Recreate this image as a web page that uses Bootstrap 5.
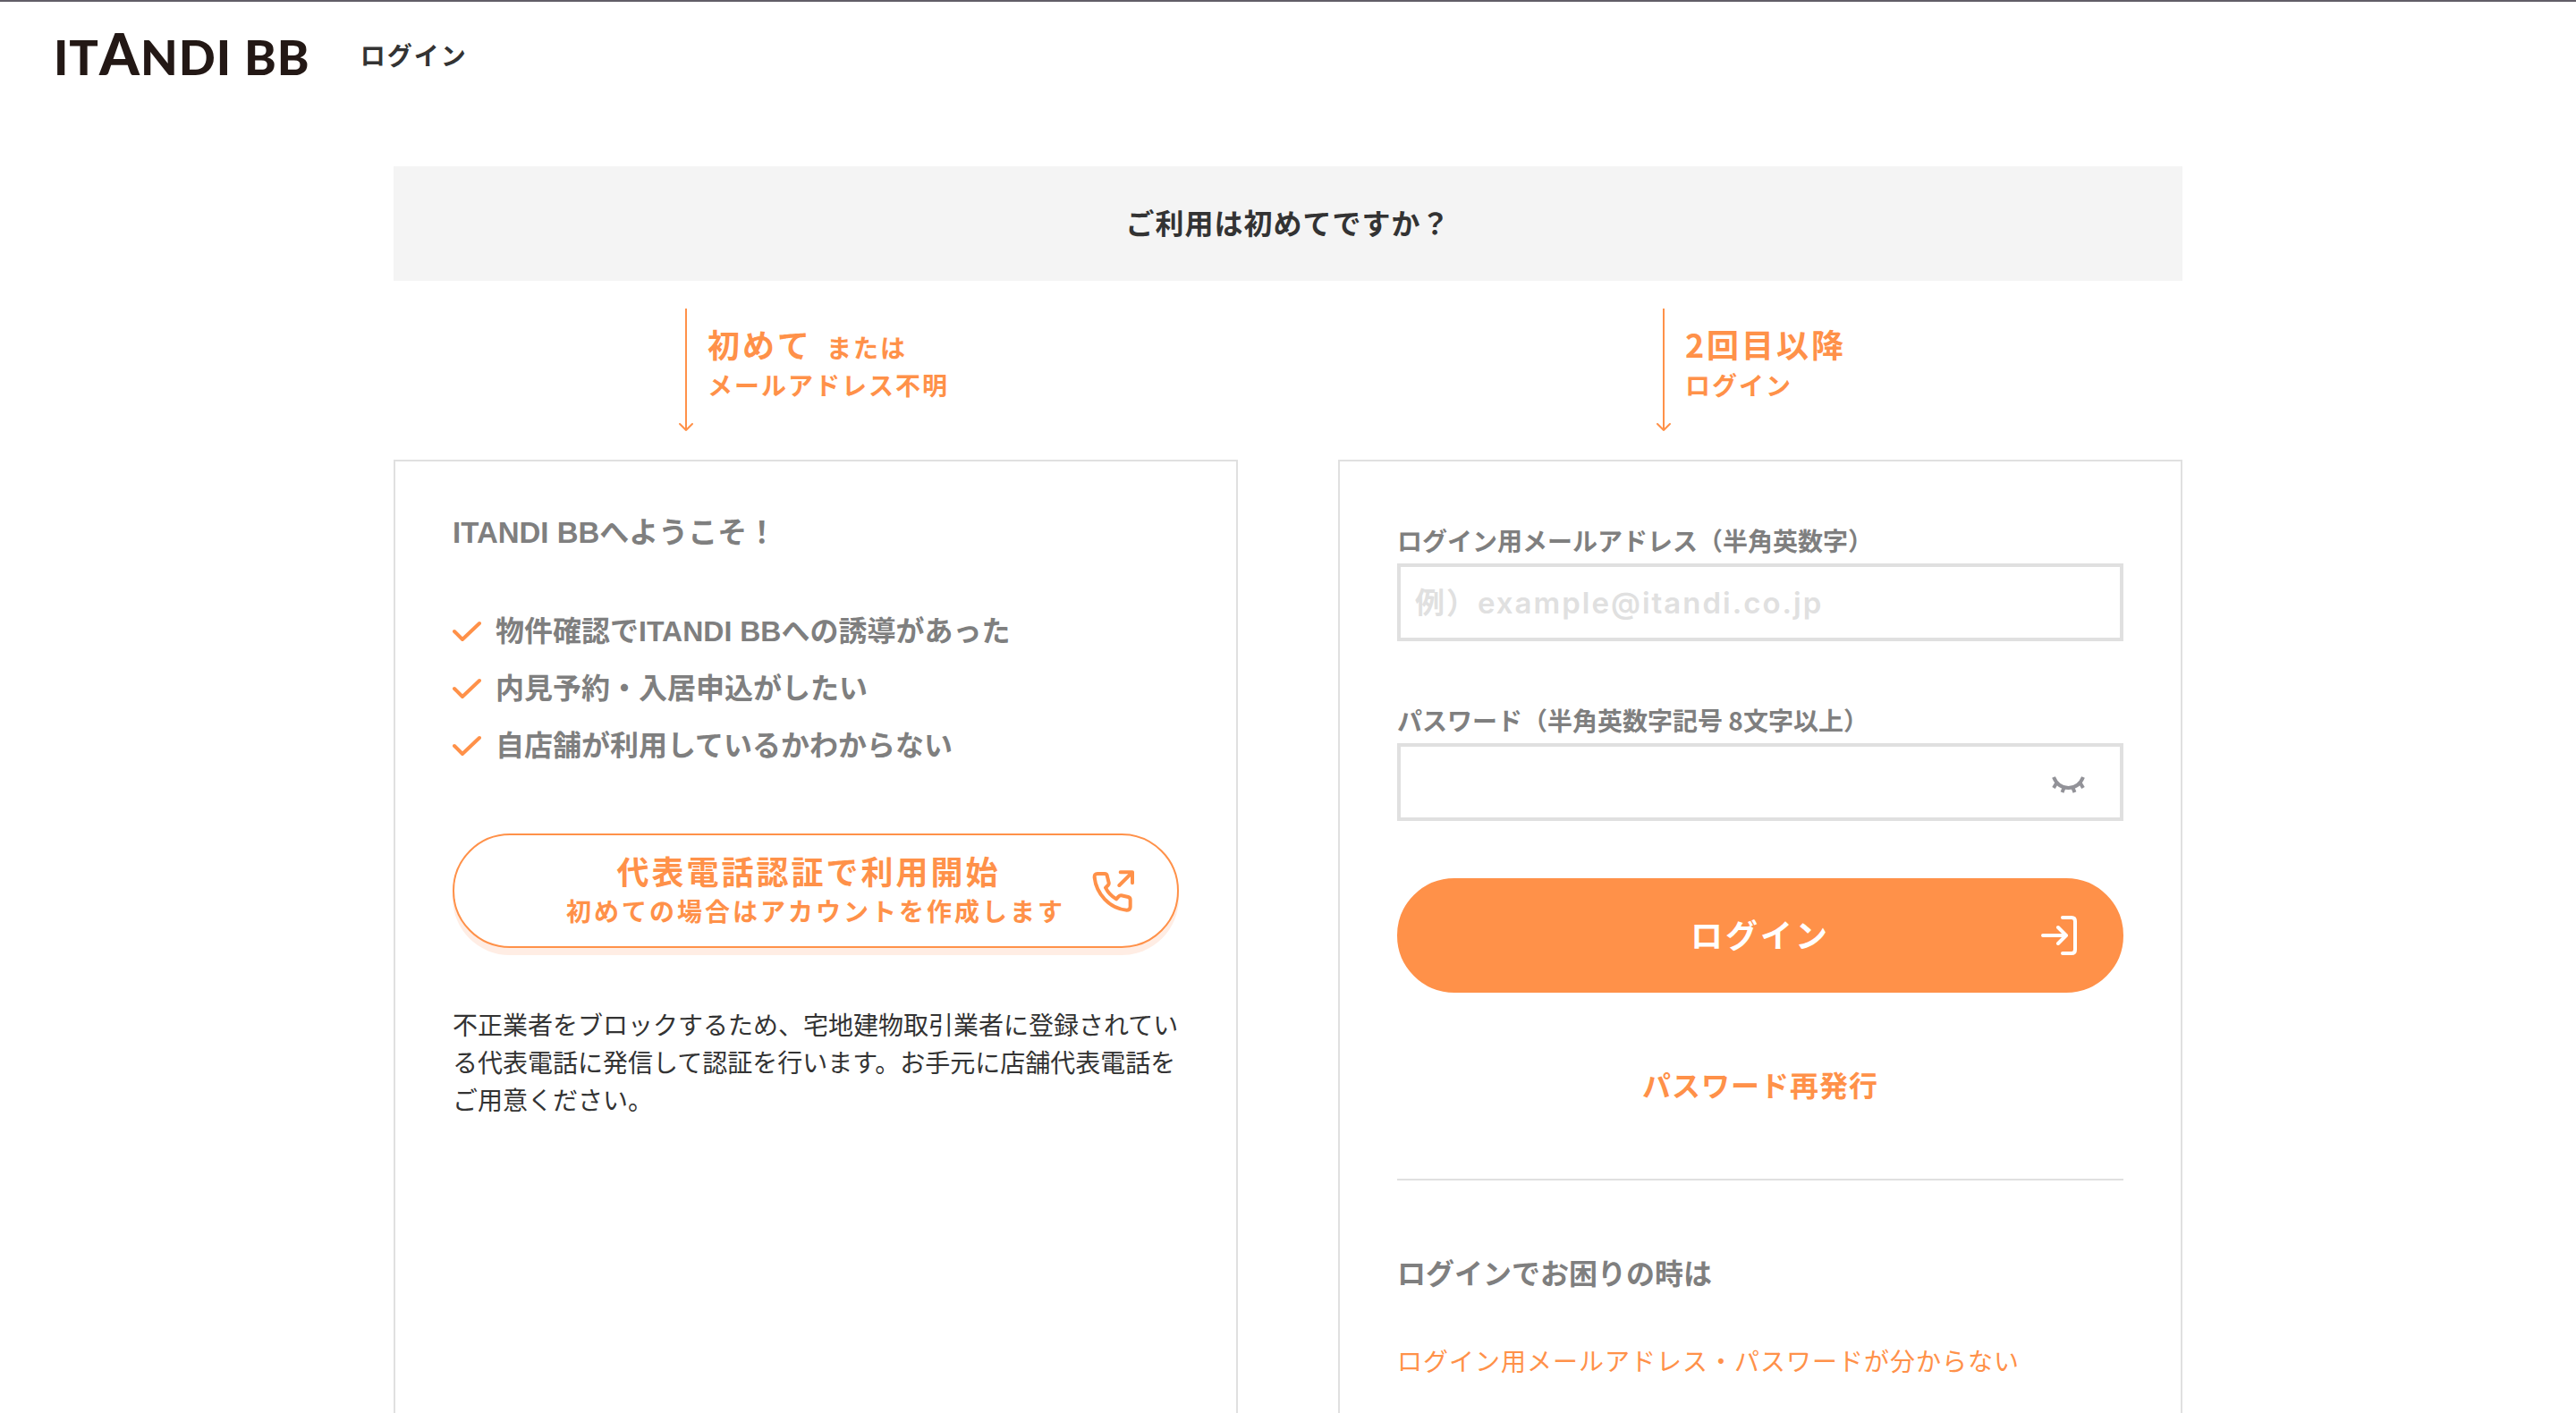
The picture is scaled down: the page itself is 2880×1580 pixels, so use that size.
<!DOCTYPE html>
<html lang="ja">
<head>
<meta charset="utf-8">
<meta name="viewport" content="width=device-width, initial-scale=1">
<title>ログイン | ITANDI BB</title>
<link href="https://cdn.jsdelivr.net/npm/bootstrap@5.3.0/dist/css/bootstrap.min.css" rel="stylesheet">
<style>
  :root { --brand: #ff9149; --line: #e0e0e0; --ink: #333; --sub: #7f7f7f; }
  body { font-family: "Noto Sans CJK JP", sans-serif; font-size: 28px; line-height: 42px; color: var(--ink); background: #fff; border-top: 2px solid #625e68; overflow-x: hidden; }
  a { color: var(--brand); text-decoration: none; }
  svg { fill: none; stroke: currentColor; stroke-linecap: round; stroke-linejoin: round; flex: none; }
  .site-head { height: 120px; padding: 0 60px; gap: 56px; }
  .brand-word { font-family: Lato, sans-serif; font-weight: 900; font-size: 54px; line-height: 64px; letter-spacing: 1px; color: #231815; }
  .brand-word .tall { font-size: 64px; }
  .page-name { font-size: 28px; font-weight: 700; letter-spacing: 2px; }
  .page-wrap { max-width: 2000px; padding: 64px 0 0; }
  .ask { background: #f4f4f4; height: 128px; font-size: 32px; font-weight: 700; letter-spacing: 1px; margin: 0; padding-bottom: 4px; }
  .halves { display: grid; grid-template-columns: 1fr 1fr; column-gap: 112px; }
  .guide { height: 200px; padding: 31px 4px 0 0; gap: 16px; color: var(--brand); font-weight: 700; letter-spacing: 2px; }
  .guide-text { padding-top: 18px; line-height: 42px; }
  .big { font-size: 36px; letter-spacing: 3px; }
  .panel { border: 2px solid var(--line); padding: 0 64px; min-height: 1120px; }
  .welcome, .reasons { font-family: "Liberation Sans", "Noto Sans CJK JP", sans-serif; font-weight: 700; color: var(--sub); }
  .welcome { font-size: 33px; line-height: 48px; margin: 56px 0 54px; }
  .reasons { font-size: 32px; line-height: 64px; margin: 0 0 66px; }
  .reasons li { gap: 16px; }
  .reasons svg { color: var(--brand); stroke-width: 4; }
  .pill { display: grid; grid-template-columns: 1fr auto 1fr; align-items: center; width: 100%; height: 128px; border-radius: 64px; border: 2px solid var(--brand); padding: 0 48px; font-weight: 700; letter-spacing: 3px; }
  .pill svg { justify-self: end; grid-column: 3; }
  .pill-text { grid-column: 2; line-height: 45px; }
  .pill-open { background: #fff; color: var(--brand); box-shadow: 0 8px 0 #ffede4; }
  .pill-full { background: var(--brand); color: #fff; }
  .pill-full .pill-text { padding-bottom: 4px; }
  .notice { margin: 64px 0 0; }
  .field-label { font-weight: 700; color: var(--sub); line-height: 48px; padding-bottom: 2px; display: block; }
  .box { border: 4px solid var(--line); height: 87px; padding: 0 38px 0 16px; margin-bottom: 64px; }
  .box input { border: 0; outline: 0; background: none; min-width: 0; font-size: 33px; font-weight: 600; font-family: Inter, "Noto Sans CJK JP", sans-serif; letter-spacing: 2px; padding: 0; }
  .box input::placeholder { color: var(--line); opacity: 1; }
  .peek { border: 0; background: none; padding: 4px 0 0; color: #929298; line-height: 0; }
  .reissue { font-size: 32px; line-height: 48px; font-weight: 700; letter-spacing: 1px; padding: 78px 0 82px; }
  .rule { border: 0; border-top: 2px solid var(--line); opacity: 1; margin: 0 0 78px; }
  .trouble { font-size: 32px; line-height: 48px; font-weight: 700; color: var(--sub); margin: 0 0 54px; }
  .help-link { letter-spacing: 1px; }
</style>
</head>
<body>
<header class="site-head d-flex align-items-center">
  <a class="brand-word" href="#">IT<span class="tall">A</span>NDI BB</a>
  <h1 class="page-name mb-0">ログイン</h1>
</header>
<main class="page-wrap container-fluid">
  <h2 class="ask d-flex align-items-center justify-content-center">ご利用は初めてですか？</h2>
  <div class="halves">
    <div class="guide d-flex justify-content-center">
      <svg width="16" height="138" viewBox="0 0 16 138" stroke-width="2"><path d="M8 0V136M1 129l7 7 7-7"/></svg>
      <div class="guide-text"><span class="big">初めて</span><span class="ms-3">または</span><br>メールアドレス不明</div>
    </div>
    <div class="guide d-flex justify-content-center">
      <svg width="16" height="138" viewBox="0 0 16 138" stroke-width="2"><path d="M8 0V136M1 129l7 7 7-7"/></svg>
      <div class="guide-text pe-3"><span class="big">2回目以降</span><br>ログイン</div>
    </div>
    <section class="panel">
      <h3 class="welcome">ITANDI BBへようこそ！</h3>
      <ul class="reasons list-unstyled">
        <li class="d-flex align-items-center"><svg width="32" height="24" viewBox="0 0 32 24"><path d="M2 12l9 9L30 3"/></svg>物件確認でITANDI BBへの誘導があった</li>
        <li class="d-flex align-items-center"><svg width="32" height="24" viewBox="0 0 32 24"><path d="M2 12l9 9L30 3"/></svg>内見予約・入居申込がしたい</li>
        <li class="d-flex align-items-center"><svg width="32" height="24" viewBox="0 0 32 24"><path d="M2 12l9 9L30 3"/></svg>自店舗が利用しているかわからない</li>
      </ul>
      <button type="button" class="pill pill-open">
        <span class="pill-text"><span class="big d-block pe-3">代表電話認証で利用開始</span><span class="d-block">初めての場合はアカウントを作成します</span></span>
        <svg width="50" height="50" viewBox="115 155 150 150" stroke-width="12"><path d="M142 173h24q7 0 8 6l6 24q1 5-3 9l-8 8q12 24 36 38l8-9q4-4 9-3l23 5q7 2 7 9v24q0 11-12 11C182 290 138 240 132 186q-1-13 10-13zM219 168h40v36M259 168l-44 44"/></svg>
      </button>
      <p class="notice">不正業者をブロックするため、宅地建物取引業者に登録されている代表電話に発信して認証を行います。お手元に店舗代表電話をご用意ください。</p>
    </section>
    <section class="panel">
      <form class="pt-5">
        <div class="pt-3">
          <label class="field-label" for="mail">ログイン用メールアドレス（半角英数字）</label>
          <div class="box d-flex align-items-center"><input class="flex-grow-1" id="mail" type="email" placeholder="例）example@itandi.co.jp"></div>
          <label class="field-label" for="pass">パスワード（半角英数字記号 8文字以上）</label>
          <div class="box d-flex align-items-center"><input class="flex-grow-1" id="pass" type="password">
            <button type="button" class="peek" aria-label="パスワードを表示"><svg width="40" height="24" viewBox="0 0 40 24" stroke-width="4"><path d="M4 4q5 12 16.500 12T37 4M7 11l-3 5M15.500 16l-2 5M25.500 16l2 5M34 11l3 5" stroke-linecap="butt"/></svg></button>
          </div>
        </div>
        <button type="submit" class="pill pill-full">
          <span class="pill-text big">ログイン</span>
          <svg width="44" height="48" viewBox="0 0 44 48" stroke-width="4"><path d="M4 24h25M21 15l9 9-9 9M26 4h10q4 0 4 4v32q0 4-4 4H26"/></svg>
        </button>
      </form>
      <div class="reissue text-center"><a href="#">パスワード再発行</a></div>
      <hr class="rule">
      <h3 class="trouble">ログインでお困りの時は</h3>
      <a class="help-link" href="#">ログイン用メールアドレス・パスワードが分からない</a>
    </section>
  </div>
</main>
<script src="https://cdn.jsdelivr.net/npm/bootstrap@5.3.0/dist/js/bootstrap.bundle.min.js"></script>
</body>
</html>
